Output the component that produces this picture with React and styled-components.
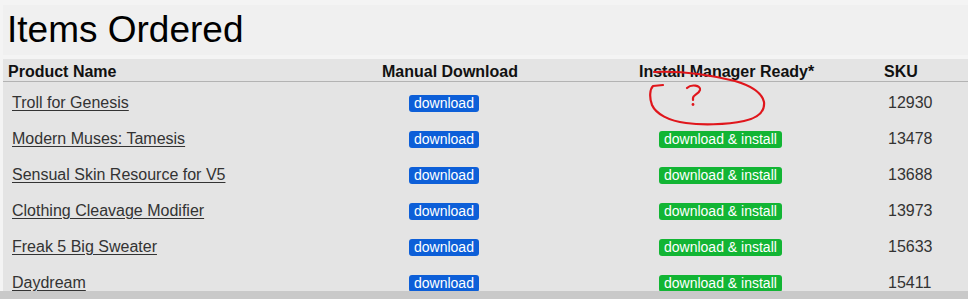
import React from "react";
import styled, { createGlobalStyle } from "styled-components";

const GlobalStyle = createGlobalStyle`
  html, body { margin: 0; padding: 0; }
  body {
    background: #f4f4f4;
    font-family: "Liberation Sans", Arial, sans-serif;
    color: #333;
  }
`;

const Page = styled.div`
  position: relative;
  height: 299px;
  display: flex;
  flex-direction: column;
  overflow: hidden;
`;

const Main = styled.div`
  flex: 1;
  min-height: 0;
  overflow: hidden;
  display: flex;
  flex-direction: column;
  gap: 4px;
  padding: 5px 0 0 3px;
`;

const TitleBar = styled.div`
  height: 50px;
  box-sizing: border-box;
  padding: 3px 0 0 4px;
  background: #f0f0f0;
  flex: none;
`;

const Title = styled.h1`
  margin: 0;
  font-size: 37px;
  line-height: 43px;
  font-weight: 400;
  color: #000;
`;

const Panel = styled.div`
  flex: 1;
  background: #e4e4e4;
`;

const Grid = styled.div`
  display: grid;
  grid-template-columns: 371px 186px 320px 1fr;
  align-items: center;
`;

const HeaderRow = styled(Grid)`
  box-sizing: border-box;
  height: 23px;
  padding-top: 4px;
  align-items: start;
  border-bottom: 1px solid #b3b3b3;
  margin-bottom: 3px;
`;

const HeaderCell = styled.div`
  padding-left: ${(p) => p.$pl}px;
  font-size: 16px;
  line-height: 18px;
  font-weight: 700;
  color: #111;
  white-space: nowrap;
`;

const Row = styled(Grid)`
  height: 36px;
`;

const Cell = styled.div`
  padding-left: ${(p) => p.$pl}px;
  display: flex;
  align-items: center;
  white-space: nowrap;
`;

const ProductLink = styled.a`
  font-size: 16px;
  color: #333;
  text-decoration: underline;
  text-underline-offset: 2px;
  cursor: pointer;
`;

const Sku = styled.span`
  font-size: 16px;
  color: #333;
`;

const Button = styled.a`
  display: inline-block;
  height: 17px;
  line-height: 17px;
  padding: 0 5px;
  border-radius: 3px;
  font-size: 14px;
  color: #fff;
  text-decoration: none;
  background: ${(p) => (p.$variant === "install" ? "#12b534" : "#0d5fd8")};
  cursor: pointer;
`;

const BottomBar = styled.div`
  flex: none;
  height: 8px;
  background: #c9c9c9;
`;

const Annotation = styled.svg`
  position: absolute;
  left: 640px;
  top: 65px;
  width: 140px;
  height: 65px;
  pointer-events: none;
  overflow: visible;
`;

const columns = [
  { label: "Product Name", head: 5, data: 9 },
  { label: "Manual Download", head: 8, data: 35 },
  { label: "Install Manager Ready*", head: 79, data: 99 },
  { label: "SKU", head: 4, data: 8 },
];

const items = [
  { name: "Troll for Genesis", install: false, sku: "12930" },
  { name: "Modern Muses: Tamesis", install: true, sku: "13478" },
  { name: "Sensual Skin Resource for V5", install: true, sku: "13688" },
  { name: "Clothing Cleavage Modifier", install: true, sku: "13973" },
  { name: "Freak 5 Big Sweater", install: true, sku: "15633" },
  { name: "Daydream", install: true, sku: "15411" },
];

export default function App() {
  return (
    <>
      <GlobalStyle />
      <Page>
        <Main>
          <TitleBar>
            <Title>Items Ordered</Title>
          </TitleBar>
          <Panel>
            <HeaderRow>
              {columns.map((c) => (
                <HeaderCell key={c.label} $pl={c.head}>
                  {c.label}
                </HeaderCell>
              ))}
            </HeaderRow>
            {items.map((it) => (
              <Row key={it.sku}>
                <Cell $pl={columns[0].data}>
                  <ProductLink>{it.name}</ProductLink>
                </Cell>
                <Cell $pl={columns[1].data}>
                  <Button>download</Button>
                </Cell>
                <Cell $pl={columns[2].data}>
                  {it.install && <Button $variant="install">download &amp; install</Button>}
                </Cell>
                <Cell $pl={columns[3].data}>
                  <Sku>{it.sku}</Sku>
                </Cell>
              </Row>
            ))}
          </Panel>
        </Main>
        <BottomBar />
        <Annotation viewBox="0 0 140 65">
          <g fill="none" stroke="#e0161c" strokeWidth="2.2" strokeLinecap="round" strokeLinejoin="round">
            <path d="M 14 7 C 35 6, 62 8, 95 16 C 112 21, 122 28, 124 37 C 125 47, 118 53, 104 56 C 86 60, 60 60, 46 58 C 29 56, 16 49, 12 40 C 9 32, 10 24, 13 21 L 23 20" />
            <path d="M 47 23 C 51 19, 61 20, 60 25 C 59 29, 53 30, 53 33 L 53 35" />
          </g>
          <circle cx="53" cy="39.5" r="1.4" fill="#e0161c" />
        </Annotation>
      </Page>
    </>
  );
}
